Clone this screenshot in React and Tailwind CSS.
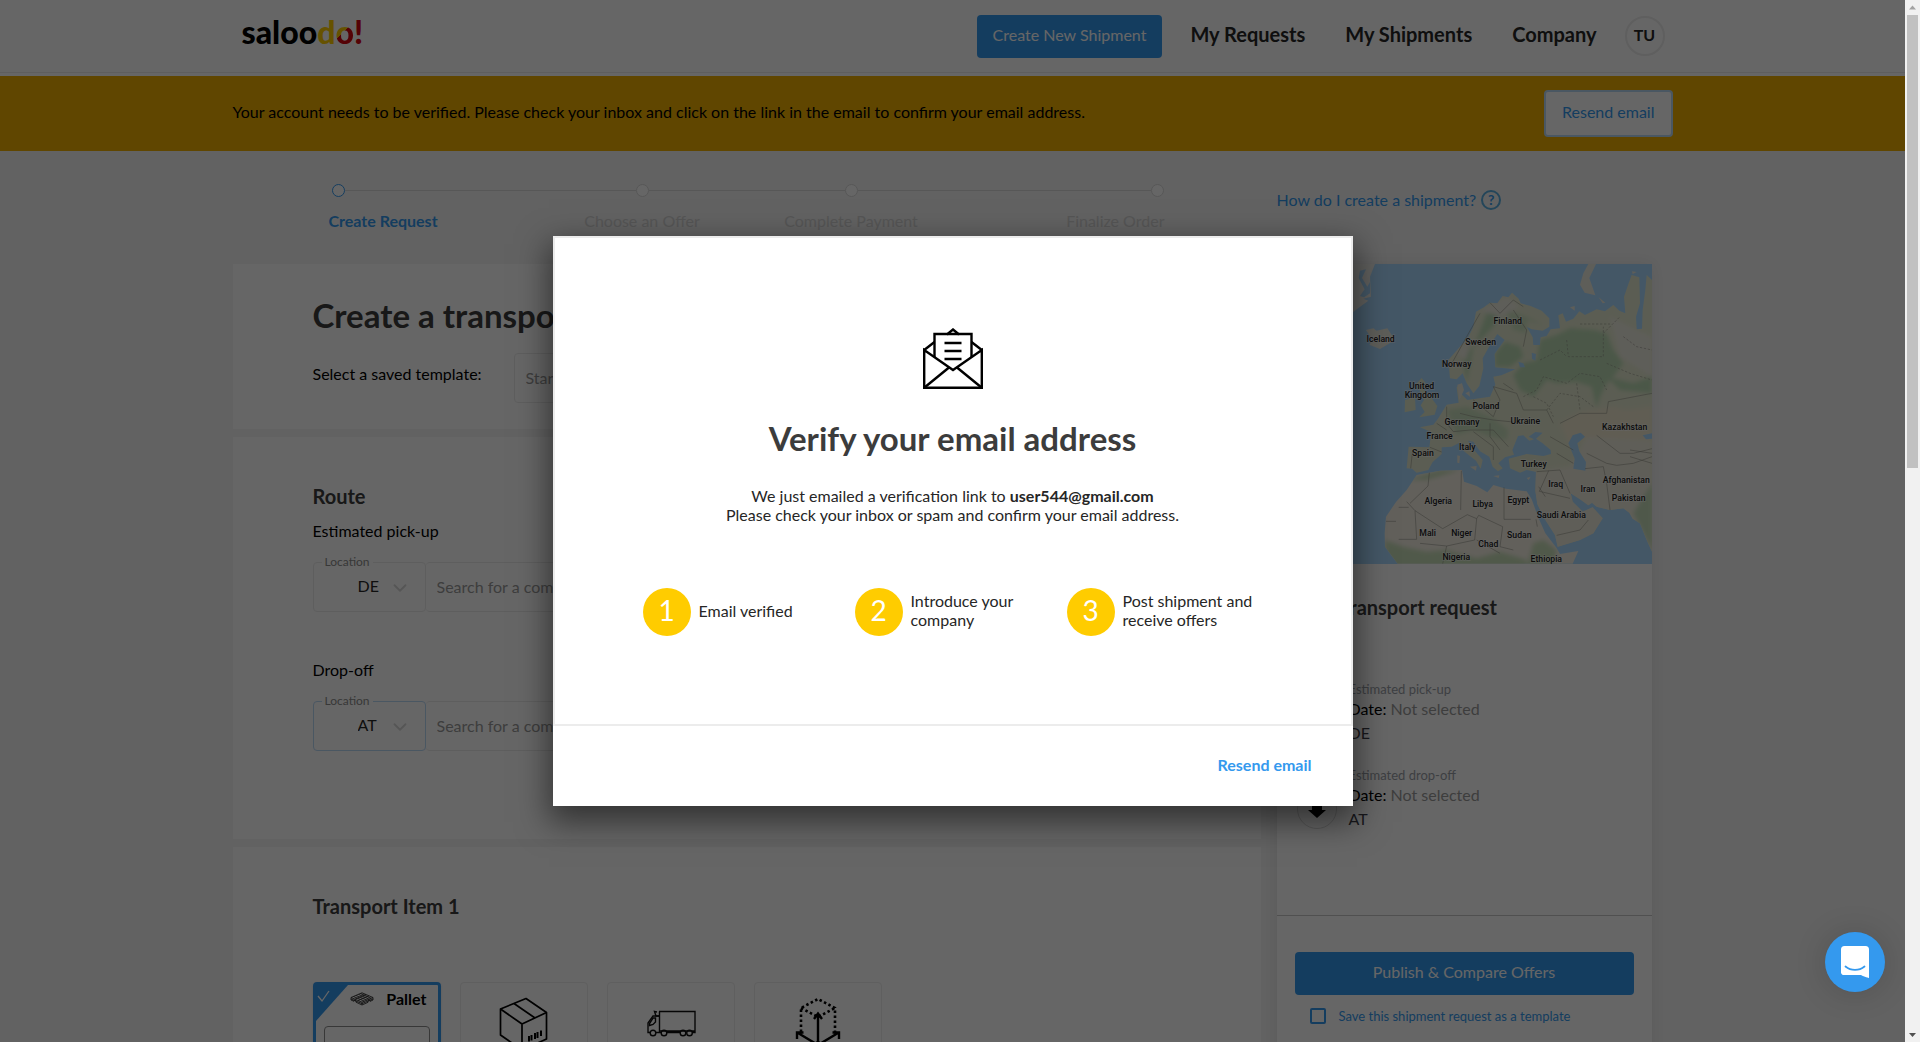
import React from "react";
import { ChevronDown } from "lucide-react";

const LAND =
  "M570 385L565 330 600 290 625 262 640 230 648 185 672 172 690 158 712 160 728 138 745 142 756 128 776 146 782 160 812 168 845 182 868 205 868 230 848 242 815 238 800 230 818 262 820 285 840 285 842 262 860 258 872 238 900 235 895 196 908 190 918 215 940 206 958 184 975 195 1010 178 1035 184 1060 165 1078 182 1096 190 1092 140 1106 100 1115 75 1138 82 1140 160 1128 200 1130 238 1146 236 1148 180 1156 120 1160 75 1176 90 1176 905 1160 870 1140 820 1118 806 1108 788 1090 775 1050 780 1010 770 996 758 985 766 960 748 932 730 938 755 968 785 988 776 998 772 1028 805 1000 850 960 870 893 890 885 855 850 800 832 762 826 722 828 665 800 660 780 668 750 655 746 626 800 612 850 618 873 612 872 600 846 578 828 566 848 548 826 546 806 560 822 568 808 572 790 556 774 558 757 600 762 614 735 622 715 640 728 655 714 664 698 650 688 620 660 604 640 575 624 572 634 590 668 630 662 656 648 632 612 604 598 578 575 590 545 592 545 612 518 636 505 660 470 668 456 656 440 655 446 590 508 592 514 546 480 532 520 524 534 506 560 464 596 458 590 412 606 400 604 432 622 450 690 440 706 404 700 380 724 376 766 358 706 352 704 312 734 270 712 252 690 285 668 325 670 355 658 408 640 430 620 400 608 370 590 388Z";
const AFRICA =
  "M470 675L540 662 606 660 612 695 650 708 682 727 700 705 738 716 800 724 815 748 836 805 856 850 888 892 900 912 955 903 938 941 413 941 375 890 374 850 378 800 408 756 440 720Z";

const MAP_LABELS = [
  ["Finland", 743, 222], ["Iceland", 362, 276], ["Sweden", 662, 285], ["Norway", 590, 351],
  ["United", 485, 417], ["Kingdom", 486, 444], ["Poland", 678, 477], ["Ukraine", 796, 522],
  ["Germany", 606, 525], ["France", 539, 567], ["Kazakhstan", 1094, 540], ["Italy", 622, 600],
  ["Spain", 489, 618], ["Turkey", 821, 651], ["Afghanistan", 1099, 699], ["Iraq", 887, 712],
  ["Iran", 984, 726], ["Pakistan", 1106, 753], ["Algeria", 535, 762], ["Libya", 668, 771],
  ["Egypt", 775, 760], ["Saudi Arabia", 904, 804], ["Mali", 503, 858], ["Niger", 605, 858],
  ["Sudan", 778, 864], ["Chad", 685, 891], ["Nigeria", 589, 930], ["Ethiopia", 859, 936],
];

function EuropeMap() {
  return (
    <svg viewBox="51 42 1125 900" className="block w-full bg-[#aadaff]" role="img" aria-label="Map">
      <defs>
        <clipPath id="land"><path d={LAND} /></clipPath>
        <clipPath id="africa"><path d={AFRICA} /></clipPath>
        <filter id="soft"><feGaussianBlur stdDeviation="7" /></filter>
      </defs>
      <path fill="#e4e9cf" d={LAND} />
      <g clipPath="url(#land)">
        <g filter="url(#soft)">
          <path fill="#eeebdc" d="M820 665L880 655 930 650 980 560 1176 570 1176 941 800 941Z" />
          <path fill="#f0e8cf" d="M900 520L960 485 1060 470 1100 480 1176 470 1176 570 980 560 930 590Z" />
          <path fill="#bbdab4" d="M840 270L890 255 930 235 1000 240 1040 250 1060 300 1090 340 1060 380 1040 400 1020 440 1010 475 995 410 950 395 890 400 860 390 820 440 780 420 760 375 790 340 830 330Z" />
          <path fill="#bbdab4" d="M705 350L705 310 735 275 780 290 790 320 750 350ZM620 400L640 290 700 230 720 180 680 190 650 270 610 330ZM1040 380L1120 400 1176 380 1176 430 1080 420Z" />
          <path fill="#c9dfbd" d="M560 480L620 470 700 505 745 540 740 570 690 560 640 540 590 555ZM740 180L800 200 850 225 800 210 800 250 760 240Z" />
          <path fill="#eceadf" d="M660 180L740 140 780 170 720 200ZM585 310L630 260 620 330ZM1050 200L1130 240 1176 260 1176 380 1080 320Z" />
          <path fill="#c5ddb9" d="M1120 790L1176 700 1176 900Z" />
        </g>
      </g>
      <path fill="#f5f0e4" d={AFRICA} />
      <g clipPath="url(#africa)">
        <g filter="url(#soft)">
          <path fill="#c9dfb9" d="M375 870L430 890 500 905 560 900 650 925 720 905 800 930 800 960 375 960ZM820 880L850 870 890 900 880 950 800 950ZM440 690L540 660 600 660 500 690Z" />
        </g>
      </g>
      <g fill="#e0e8ca">
        <path d="M470 400L485 384 496 398 492 420 515 445 532 468 524 494 478 502 494 486 482 466 492 450ZM435 450L465 442 467 480 434 487Z" />
        <path fill="#eceadf" d="M318 240L340 235 350 242 382 235 405 270 360 297 328 284 338 270Z" />
        <path fill="#eceadf" d="M985 42L1008 42 988 84 1006 136 974 128 960 104 970 70ZM1016 142L1036 158 1028 160ZM930 172L944 168 944 182ZM1116 64L1130 66 1118 72ZM592 404L606 400 612 420 598 450ZM616 430L628 424 630 440ZM592 616L600 618 598 640 592 638ZM630 650L650 648 648 662ZM700 678L718 676 716 684ZM800 684L812 680 806 690Z" />
        <path fill="#efefea" d="M51 42L345 42 330 80 333 140 310 146 325 152 260 200 51 260Z" />
      </g>
      <g fill="#aadaff">
        <path d="M925 580L938 556 962 548 975 560 952 580 958 604 978 636 976 662 940 656 944 626ZM775 335L790 340 795 352 780 352ZM815 308L828 312 826 332 816 326ZM1148 556L1176 550 1176 566 1158 568ZM300 62L318 58 306 84 322 110 330 96 330 130 312 142 300 138 314 118 296 84Z" />
      </g>
      <g fill="none" stroke="#8f8f86" strokeWidth="1.6">
        <path d="M440 755L465 782 548 836 622 794 650 806 656 796 728 830M604 662L602 780M732 712L732 808 812 808M828 808L832 830M650 806L644 870 560 888 480 880M378 814L408 814M416 772L446 772M416 868L470 868M465 782L470 868M728 830L720 890 760 900M508 668L504 708 450 760M856 740L836 710M830 665L900 660 930 730M866 662L838 724 930 745M890 856L960 840 985 810M975 656L1030 650 1040 700 1050 780M980 610L1040 640 1070 646 1120 640 1176 620M1010 556L1080 610 1120 610 1176 596M900 520L960 490 1040 490 1045 455 1176 430M560 888L548 941M650 870L720 910" />
        <path d="M600 490L640 500 700 510 760 516M560 470L560 520 580 545 630 540 700 540 745 590M640 450L700 500 720 450 700 410M700 410L770 430 790 480 860 480 880 520M640 545L700 590 700 630M690 520L690 560 720 600M730 400L760 420M510 592L545 606M458 600L452 655M530 520L560 540M870 560L940 600M890 610L940 640M690 158L720 190 760 150 790 170M570 350L620 260 660 190M790 290L800 240 760 180M1110 620L1176 640M1110 600L1176 610" />
        <path strokeDasharray="7 5" d="M790 440L830 420 850 380 920 400 960 370 1020 380 1040 420M860 480L900 430 960 440 1000 470M920 270L925 320 1030 320 1030 230M1030 250L1080 200M960 222L1050 222M1090 260L1130 290 1176 300M840 330L900 300 920 320M1040 340L1110 370 1176 390M820 440L860 460 880 500M950 400L960 480" />
      </g>
      <g fontFamily="Roboto, sans-serif" fontWeight="500" fontSize="26" fill="#222" stroke="#fff" strokeOpacity="0.6" strokeWidth="4" paintOrder="stroke" textAnchor="middle">
        {MAP_LABELS.map(([name, x, y]) => (
          <text key={name} x={x} y={y}>{name}</text>
        ))}
      </g>
    </svg>
  );
}

function Header() {
  return (
    <header className="bg-white pb-[3px]">
      <div className="border-b border-[#ebebeb]">
        <div className="mx-auto flex h-[72px] max-w-[1440px] items-center justify-between pr-2 pl-[9px]">
          <a href="#home" className="pb-2 text-[32px] leading-9 font-black text-black">
            saloo<span className="text-[#ffcc00]">d</span>
            <span className="bg-linear-135 from-[#ffcc00] from-50% to-[#d40511] to-50% bg-clip-text text-transparent">o</span>
            <span className="text-[#d40511]">!</span>
          </a>
          <nav className="flex items-center text-xl font-bold text-[#262626]">
            <button className="mr-2 h-[43px] rounded bg-[#3499ee] px-4 pb-0.5 text-base font-normal text-white">Create New Shipment</button>
            <a href="#requests" className="px-5 pb-1">My Requests</a>
            <a href="#shipments" className="px-5 pb-1">My Shipments</a>
            <a href="#company" className="px-5 pb-1">Company</a>
            <button className="ml-2 size-10 rounded-full border-2 border-[#ededed] pb-0.5 text-base font-bold">TU</button>
          </nav>
        </div>
      </div>
    </header>
  );
}

function Banner() {
  return (
    <section className="bg-[#f0af00]">
      <div className="mx-auto flex h-[75px] max-w-[1440px] items-center justify-between">
        <p className="pb-1">Your account needs to be verified. Please check your inbox and click on the link in the email to confirm your email address.</p>
        <button className="h-[47px] rounded border-2 border-[#b8d9f6] bg-white px-4 pb-1 text-[#3499ee]">Resend email</button>
      </div>
    </section>
  );
}

const STEPS = [
  { name: "Create Request", align: "items-start", left: "w-[3px]", right: "flex-1 h-px bg-[#dadada]", dot: "border-[#3499ee]", text: "font-bold text-[#3499ee]" },
  { name: "Choose an Offer", align: "items-center", left: "flex-1 h-px bg-[#dadada]", right: "flex-1 h-px bg-[#dadada]", dot: "border-[#dadada]", text: "text-[#d4d4d4]" },
  { name: "Complete Payment", align: "items-center", left: "flex-1 h-px bg-[#dadada]", right: "flex-1 h-px bg-[#dadada]", dot: "border-[#dadada]", text: "text-[#d4d4d4]" },
  { name: "Finalize Order", align: "items-end", left: "flex-1 h-px bg-[#dadada]", right: "w-px", dot: "border-[#dadada]", text: "text-[#d4d4d4]" },
];

function Stepper() {
  return (
    <ol className="grid h-[113px] grid-cols-4 px-24 pt-[33px]">
      {STEPS.map((s) => (
        <li key={s.name} className={"flex flex-col gap-[14px] " + s.align}>
          <span className="flex w-full items-center">
            <span className={s.left} />
            <span className={"size-[13px] rounded-full border bg-white " + s.dot} />
            <span className={s.right} />
          </span>
          <span className={"leading-5 " + s.text}>{s.name}</span>
        </li>
      ))}
    </ol>
  );
}

function LocationRow({ title, id, value, border }) {
  return (
    <div>
      <h3 className="leading-5">{title}</h3>
      <div className="mt-[21px] flex h-[50px]">
        <div className={"relative w-[113px] rounded-sm border " + border}>
          <label htmlFor={id} className="absolute -top-2 left-2 bg-white px-[3px] text-xs leading-[14px] text-[#8c8c8c]">Location</label>
          <select id={id} defaultValue={value} className="h-full w-full appearance-none pb-0.5 pl-11 text-[#262626]">
            <option>{value}</option>
          </select>
          <ChevronDown className="pointer-events-none absolute top-[14px] right-[14px] text-[#d6d6d6]" size={22} strokeWidth={2} />
        </div>
        <input aria-label={title + " company"} placeholder="Search for a company or address" className="min-w-0 flex-1 rounded-sm border border-l-0 border-[#ebebeb] px-[11px] placeholder:text-[#9a9a9a]" />
      </div>
    </div>
  );
}

function PalletIcon() {
  return (
    <svg width="24" height="14" viewBox="0 0 24 14" fill="none" stroke="#333" strokeWidth="0.9">
      <path d="M1 5.5L12 0.8 23 5.5 12 10.2Z" />
      <path d="M3.5 4.5L14.5 9.2M6 3.5L17 8.2M8.500 2.400L19 7.200M10.500 1.500L21 6.300M5 7.200L16 2.400M8 8.500L19 3.800" />
      <path d="M1 5.500V8L4 9.300V7.800L6 8.700V10.200L12 13 18 10.300V8.600L20 7.700V9.400L23 8V5.500M12 10.200V13M1 7L12 11.600 23 7" />
    </svg>
  );
}

function BoxIcon() {
  return (
    <svg width="50" height="54" viewBox="0 0 50 54" fill="none" stroke="#000" strokeWidth="1.7" strokeLinejoin="round">
      <path d="M27 1.500L47.500 15.500V42L23 53 1.500 38V12Z" />
      <path d="M1.500 12L23 27 47.500 15.500M23 27V53M15 6.500L36 21" />
      <path d="M30 39v5.500M32.500 38v5.500M36 36v6M38.500 35v6M42 33.500v5.500" strokeWidth="2" />
    </svg>
  );
}

function TruckIcon() {
  return (
    <svg width="50" height="27" viewBox="0 0 50 27" fill="none" stroke="#111" strokeWidth="1.4">
      <path d="M13 1.500H49V22.500H46M34 22.500H21M13.500 1.500V22.500M11 2L8.500 1.500 10 6H13M13.500 21H49" />
      <path d="M13 6H7L2 13V22.500H4M9.500 22.500H15" />
      <path d="M9.500 8H7L3.500 13.500V15.500L7 14.500 9.500 12Z" />
      <circle cx="7" cy="23" r="2.800" /><circle cx="18" cy="23" r="2.800" /><circle cx="37" cy="23" r="2.800" /><circle cx="43.500" cy="23" r="2.800" />
    </svg>
  );
}

function DimensionsIcon() {
  return (
    <svg width="46" height="54" viewBox="0 0 46 54" fill="none" stroke="#000">
      <path strokeWidth="2.600" strokeDasharray="2.500 2.500" d="M6 35V11L23 2 40 11V35M6 11L23 20 40 11" />
      <path d="M23 48V18M19 22L23 16.500 27 22M23 48L3 36M2 42V35.500H8.500M23 48L43 36M44 42V35.500H37.500" strokeWidth="2.400" />
      <circle cx="23" cy="48" r="3.500" fill="#000" />
    </svg>
  );
}

function TransportTypes() {
  return (
    <div className="mt-16 flex gap-[19px]">
      <div className="relative h-[130px] w-32 rounded border-3 border-[#3499ee] px-2 pt-0.5 shadow">
        <svg className="absolute top-0 left-0" width="32" height="36" viewBox="0 0 32 36" fill="none">
          <path d="M0 0H32L0 36Z" fill="#3499ee" />
          <path d="M2 11L6 16 13 6" stroke="#fff" strokeWidth="1.300" />
        </svg>
        <div className="flex items-center justify-end gap-3 pr-[3px]">
          <PalletIcon />
          <span className="leading-6 font-bold">Pallet</span>
        </div>
        <select aria-label="Pallet type" className="mt-[15px] h-12 w-full appearance-none rounded border border-[#8c8c8c]" />
      </div>
      <button aria-label="Package" className="flex h-[130px] w-32 justify-center rounded border border-[#ededed] pt-[14px]"><BoxIcon /></button>
      <button aria-label="Truck" className="flex h-[130px] w-32 justify-center rounded border border-[#ededed] pt-[27px]"><TruckIcon /></button>
      <button aria-label="Custom dimensions" className="flex h-[130px] w-32 justify-center rounded border border-[#ededed] pt-[14px]"><DimensionsIcon /></button>
    </div>
  );
}

function RequestForm() {
  return (
    <div className="flex flex-col gap-2">
      <section className="h-[165px] bg-white px-20 pt-[31px]">
        <h1 className="text-[33px] leading-10 font-bold text-[#3c3c3c]">Create a transport request</h1>
        <div className="mt-[18px] flex">
          <label htmlFor="template" className="w-[201px] pt-[9px]">Select a saved template:</label>
          <select id="template" className="h-[50px] flex-1 appearance-none rounded-sm border border-[#ebebeb] px-[11px] text-[#9a9a9a]">
            <option>Start typing the template name</option>
          </select>
        </div>
      </section>
      <section className="flex h-[402px] flex-col bg-white px-20 pt-[47px]">
        <h2 className="text-xl leading-6 font-bold text-[#3c3c3c]">Route</h2>
        <div className="mt-[13px] flex flex-col gap-12">
          <LocationRow title="Estimated pick-up" id="from" value="DE" border="border-[#ebebeb]" />
          <LocationRow title="Drop-off" id="to" value="AT" border="border-[#b8d9f6]" />
        </div>
      </section>
      <section className="bg-white px-20 pt-[47px] pb-20">
        <h2 className="text-xl leading-6 font-bold text-[#3c3c3c]">Transport Item 1</h2>
        <TransportTypes />
      </section>
    </div>
  );
}

function RouteStop({ title, place, down }) {
  return (
    <div className="flex items-end gap-3">
      <span className="flex size-10 items-center justify-center rounded-full border border-[#dadada]">
        <svg width="18" height="20" viewBox="0 0 18 20" className={down ? "" : "rotate-180"}>
          <path d="M4 0h10v11h4l-9 8-9-8h4z" fill="#000" />
        </svg>
      </span>
      <div>
        <p className="text-[13px] leading-5 text-[#9a9ea6]">{title}</p>
        <p className="leading-5">Date: <span className="text-[#9a9a9a]">Not selected</span></p>
        <p className="pt-1 leading-5 text-[#3d3d48]">{place}</p>
      </div>
    </div>
  );
}

function Sidebar() {
  return (
    <aside className="w-[375px] shrink-0">
      <div className="h-[113px] pt-[37px]">
        <a href="#help" className="flex items-center gap-[5px] text-[#3499ee]">
          How do I create a shipment?
          <span className="flex size-5 items-center justify-center rounded-full border-2 border-[#5aaee0] text-sm font-bold">?</span>
        </a>
      </div>
      <div className="bg-white pb-10 shadow-[0_0_16px_rgba(0,0,0,0.08)]">
        <EuropeMap />
        <h2 className="px-5 pt-[31px] text-xl leading-6 font-bold text-[#3c3c3c]">Your transport request</h2>
        <div className="mt-[60px] flex flex-col gap-[22px] px-5">
          <RouteStop title="Estimated pick-up" place="DE" />
          <RouteStop title="Estimated drop-off" place="AT" down />
        </div>
        <div className="mt-[86px] border-t border-[#c8c8c8] px-[18px] pt-9">
          <button className="h-[43px] w-full rounded bg-[#3499ee] pb-1 text-white">Publish &amp; Compare Offers</button>
          <label className="mt-[11px] flex items-center gap-[13px] px-[15px] text-[13px] leading-5 text-[#3499ee]">
            <input type="checkbox" className="size-4 appearance-none rounded-xs border-2 border-[#3499ee]" />
            Save this shipment request as a template
          </label>
        </div>
      </div>
    </aside>
  );
}

function EnvelopeIcon() {
  return (
    <svg width="60" height="62" viewBox="0 0 60 62" fill="none" stroke="#000" strokeWidth="2.400">
      <path d="M1.200 22V59.800H58.800V22L30 42ZM1.200 22L11.500 14M58.800 22L48.500 14M24 6.500L30 1.500 36 6.500" />
      <path d="M11.500 29V6H48.500V29" />
      <path d="M1.200 59.800L26 39.500M58.800 59.800L34 39.500M21.500 15H38.500M21.500 23H38.500M21.500 31H38.500" />
    </svg>
  );
}

function VerifyDialog() {
  const items = ["Email verified", "Introduce your company", "Post shipment and receive offers"];
  return (
    <div role="dialog" aria-labelledby="verify-title" className="w-[800px] bg-white text-[#262626] shadow-[0_12px_30px_4px_rgba(0,0,0,0.5)]">
      <div className="flex h-[490px] flex-col items-center border-2 border-[#ececec] pt-[90px]">
        <EnvelopeIcon />
        <h2 id="verify-title" className="mt-7 text-[33px] leading-10 font-bold text-[#3c3c3c]">Verify your email address</h2>
        <p className="mt-7 text-center leading-[19px]">
          We just emailed a verification link to <strong>user544@gmail.com</strong>
          <br />
          Please check your inbox or spam and confirm your email address.
        </p>
        <ol className="mt-16 grid w-full grid-cols-3 pr-[72px] pl-[88px]">
          {items.map((t, i) => (
            <li key={t} className="flex items-center gap-2">
              <span className="flex size-12 shrink-0 items-center justify-center rounded-full bg-[#ffcc00] pb-1 text-[28px] text-white">{i + 1}</span>
              <span className="max-w-[140px] pb-1 leading-[19px]">{t}</span>
            </li>
          ))}
        </ol>
      </div>
      <div className="flex h-20 items-center justify-end px-[41px] pb-0.5">
        <button className="font-bold text-[#3499ee]">Resend email</button>
      </div>
    </div>
  );
}

function Scrollbar() {
  return (
    <div className="flex w-[15px] shrink-0 flex-col items-center justify-between bg-[#f1f1f1] py-[5px]">
      <div className="flex flex-col items-center gap-[5px]">
        <svg width="7" height="5" viewBox="0 0 7 4"><path d="M0 4L3.500 0 7 4Z" fill="#a3a3a3" /></svg>
        <div className="h-[453px] w-[11px] bg-[#c1c1c1]" />
      </div>
      <svg width="7" height="4" viewBox="0 0 7 4"><path d="M0 0H7L3.500 4Z" fill="#505050" /></svg>
    </div>
  );
}

export default function App() {
  return (
    <div className="flex h-screen overflow-hidden font-[Lato,sans-serif] text-base text-black">
      <div className="relative flex-1 overflow-hidden bg-[#f5f5f5]">
        <Header />
        <Banner />
        <main className="mx-auto flex max-w-[1440px] gap-4 pr-[21px]">
          <div className="min-w-0 flex-1">
            <Stepper />
            <RequestForm />
          </div>
          <Sidebar />
        </main>
        <div className="absolute inset-0 flex items-center justify-center bg-black/60">
          <VerifyDialog />
        </div>
        <button aria-label="Open chat" className="absolute right-5 bottom-[50px] flex size-[60px] items-center justify-center rounded-full bg-[#3499ee] shadow-[0_1px_32px_rgba(0,0,0,0.16)]">
          <svg width="28" height="32" viewBox="0 0 28 32">
            <path d="M28 32s-4.700-1.200-8-3H3.500A3 3 0 0 1 0 25.500V3.500A3.500 3.500 0 0 1 3.500 0h21A3.500 3.500 0 0 1 28 3.500z" fill="#fff" />
            <path d="M4.500 20.500c5.500 4.500 13.500 4.500 19 0" fill="none" stroke="#3499ee" strokeWidth="1.800" strokeLinecap="round" />
          </svg>
        </button>
      </div>
      <Scrollbar />
    </div>
  );
}
